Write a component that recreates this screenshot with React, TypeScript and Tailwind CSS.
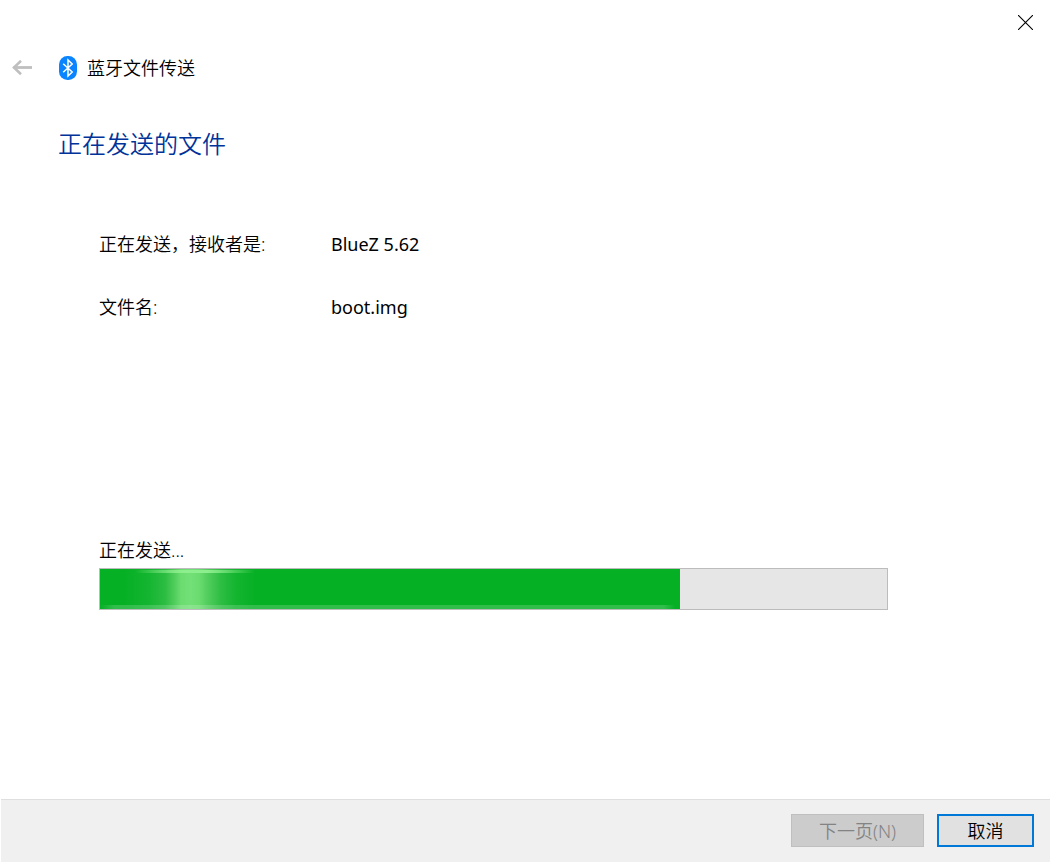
import { useState } from 'react';

const PROGRESS = 580 / 787;

function BackIcon() {
  return (
    <svg width="20" height="16" viewBox="0 0 20 16" fill="none" stroke="#bfbfbf" aria-hidden="true">
      <path d="M1.5 7.5H20" strokeWidth="2.8" />
      <path d="M9 .8 2 7.5l7 6.7" strokeWidth="2.6" />
    </svg>
  );
}

function BluetoothIcon() {
  return (
    <svg width="18" height="24" viewBox="0 0 18 24" fill="none" aria-hidden="true">
      <rect width="18" height="24" rx="8.5" fill="#0a84ff" />
      <path d="M4.2 7.8 13.2 16l-4.2 4V4l4.2 4-9 8.2" stroke="#fff" strokeWidth="1.5" />
    </svg>
  );
}

function CloseIcon() {
  return (
    <svg width="15" height="15" viewBox="0 0 15 15" stroke="#000" aria-hidden="true">
      <path d="M0 0 15 15M15 0 0 15" strokeWidth="1.1" />
    </svg>
  );
}

function TransferProgress({ value }: { value: number }) {
  return (
    <div
      role="progressbar"
      aria-labelledby="status"
      aria-valuemin={0}
      aria-valuemax={100}
      aria-valuenow={Math.round(value * 100)}
      className="h-[42px] border border-[#bcbcbc] bg-[#e6e6e6]"
    >
      <div className="relative h-full overflow-hidden bg-[#06b025]" style={{ width: `${value * 100}%` }}>
        <div className="absolute inset-y-0 left-[25px] w-[130px] bg-[linear-gradient(90deg,#06b02500_0%,#14b530_18%,#2dbd43_31%,#50cd5c_38%,#6bdc70_43%,#72e077_50%,#6bdc70_57%,#50cd5c_64%,#2dbd43_74%,#14b530_85%,#06b02500_100%)]" />
        <div className="absolute top-px left-[35px] h-[3px] w-[120px] bg-[linear-gradient(90deg,#8cee8c00,#8cee8c_40%,#8cee8c_60%,#8cee8c00)]" />
        <div className="absolute inset-x-0 bottom-0 h-1 bg-[linear-gradient(90deg,#ffffff00_0,#ffffff2b_14px,#ffffff2b_calc(100%-16px),#ffffff00_calc(100%-5px))]" />
      </div>
    </div>
  );
}

export default function App() {
  const [open, setOpen] = useState(true);
  const close = () => setOpen(false);
  if (!open) return null;

  return (
    <div className="flex min-h-screen flex-col bg-white p-px font-['Noto_Sans','Noto_Sans_CJK_SC',sans-serif] text-lg leading-6 font-[350] text-black">
      <header>
        <div className="flex justify-end">
          <button type="button" aria-label="关闭" onClick={close} className="px-[17px] py-[14px]">
            <CloseIcon />
          </button>
        </div>
        <div className="flex items-center pt-3 pl-[11px]">
          <button type="button" aria-label="后退" disabled>
            <BackIcon />
          </button>
          <div className="ml-[27px] flex items-center gap-[10px]">
            <BluetoothIcon />
            <span>蓝牙文件传送</span>
          </div>
        </div>
      </header>

      <main className="flex-1 pt-12 pr-[162px] pl-[57px]">
        <h1 className="text-2xl leading-8 font-[350] text-[#003399]">正在发送的文件</h1>
        <div className="pt-[72px] pl-[41px]">
          <dl className="grid grid-cols-[232px_1fr] gap-y-[39px]">
            <dt>正在发送，接收者是:</dt>
            <dd className="font-normal">BlueZ 5.62</dd>
            <dt>文件名:</dt>
            <dd className="font-normal">boot.img</dd>
          </dl>
          <p id="status" className="mt-[219px] mb-[6px]">正在发送...</p>
          <TransferProgress value={PROGRESS} />
        </div>
      </main>

      <footer className="flex justify-end gap-[13px] border-t border-[#dfdfdf] bg-[#f0f0f0] px-4 pt-[14px] pb-[15px]">
        <button type="button" disabled className="h-[33px] w-[133px] border border-[#bfbfbf] bg-[#cccccc] text-[#838383]">
          下一页(N)
        </button>
        <button type="button" onClick={close} className="h-[33px] w-[97px] border-2 border-[#0078d7] bg-[#e1e1e1]">
          取消
        </button>
      </footer>
    </div>
  );
}
